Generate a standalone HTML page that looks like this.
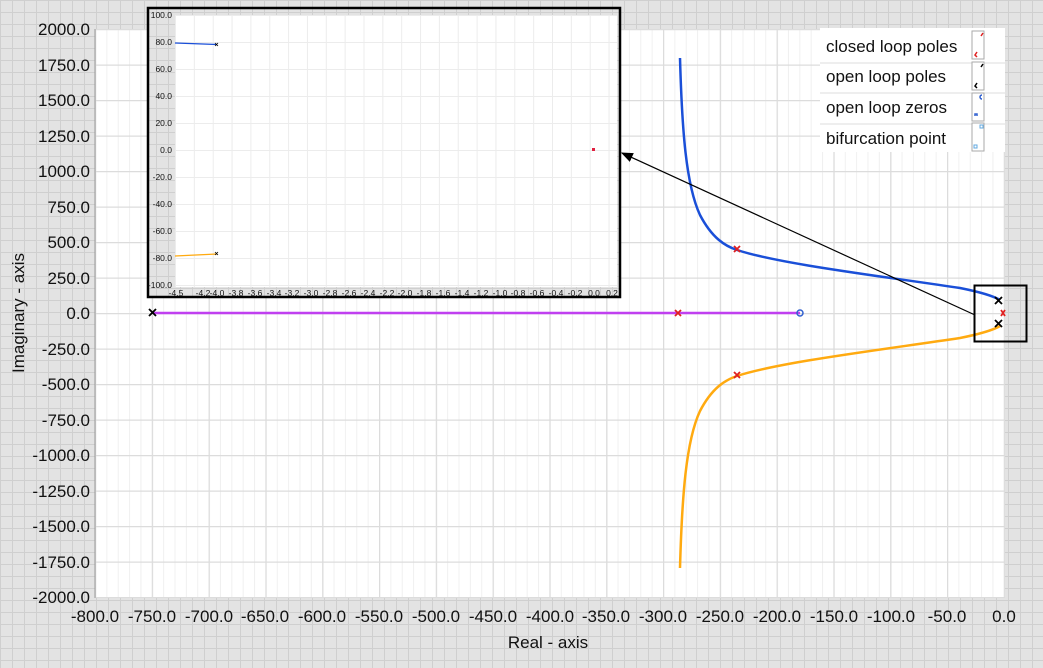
<!DOCTYPE html>
<html><head><meta charset="utf-8"><style>
html,body{margin:0;padding:0;width:1043px;height:668px;overflow:hidden;background:#e3e3e3}
svg{display:block}
text{font-family:"Liberation Sans",sans-serif;fill:#111}
</style></head><body>
<svg width="1043" height="668" viewBox="0 0 1043 668" xmlns="http://www.w3.org/2000/svg">
<defs>
<pattern id="bg" width="12" height="12" patternUnits="userSpaceOnUse">
<rect width="12" height="12" fill="#e3e3e3"/>
<path d="M0 0.5H12M0.5 0V12" stroke="#cfcfcf" stroke-width="1"/>
</pattern>
<pattern id="minv" x="95" width="11.36" height="10" patternUnits="userSpaceOnUse">
<path d="M0.5 0V10" stroke="#f0f0f0"/>
</pattern>
<pattern id="majv" x="95" width="56.8" height="10" patternUnits="userSpaceOnUse">
<path d="M0.5 0V10" stroke="#dcdcdc" stroke-width="1.5"/>
</pattern>
<pattern id="majh" y="29" width="10" height="35.5" patternUnits="userSpaceOnUse">
<path d="M0 0.5H10" stroke="#dcdcdc" stroke-width="1.5"/>
</pattern>
<pattern id="iv" x="175" width="18.85" height="10" patternUnits="userSpaceOnUse">
<path d="M0.5 0V10" stroke="#ececec"/>
</pattern>
<pattern id="ih" y="15" width="10" height="27" patternUnits="userSpaceOnUse">
<path d="M0 0.5H10" stroke="#ececec"/>
</pattern>
<marker id="ah" markerWidth="10" markerHeight="8" refX="9" refY="4" orient="auto"><path d="M0 0L10 4L0 8z" fill="#000"/></marker>
</defs>
<rect width="1043" height="668" fill="url(#bg)"/>
<rect x="95" y="29" width="910" height="569" fill="#fff"/>
<rect x="95" y="29" width="910" height="569" fill="url(#minv)"/>
<rect x="95" y="29" width="910" height="569" fill="url(#majv)"/>
<rect x="95" y="29" width="910" height="569" fill="url(#majh)"/>
<line x1="95" y1="29" x2="95" y2="598" stroke="#999"/>
<g font-size="17" text-anchor="end">
<text x="90" y="35">2000.0</text><text x="90" y="71">1750.0</text><text x="90" y="106">1500.0</text><text x="90" y="142">1250.0</text><text x="90" y="177">1000.0</text><text x="90" y="213">750.0</text><text x="90" y="248">500.0</text><text x="90" y="284">250.0</text><text x="90" y="319">0.0</text><text x="90" y="355">-250.0</text><text x="90" y="390">-500.0</text><text x="90" y="426">-750.0</text><text x="90" y="461">-1000.0</text><text x="90" y="497">-1250.0</text><text x="90" y="532">-1500.0</text><text x="90" y="568">-1750.0</text><text x="90" y="603">-2000.0</text>
</g>
<g font-size="17" text-anchor="middle">
<text x="95" y="622">-800.0</text><text x="152" y="622">-750.0</text><text x="209" y="622">-700.0</text><text x="265" y="622">-650.0</text><text x="322" y="622">-600.0</text><text x="379" y="622">-550.0</text><text x="436" y="622">-500.0</text><text x="493" y="622">-450.0</text><text x="550" y="622">-400.0</text><text x="606" y="622">-350.0</text><text x="663" y="622">-300.0</text><text x="720" y="622">-250.0</text><text x="777" y="622">-200.0</text><text x="834" y="622">-150.0</text><text x="891" y="622">-100.0</text><text x="947" y="622">-50.0</text><text x="1004" y="622">0.0</text>
</g>
<text x="548" y="648" font-size="17" text-anchor="middle">Real - axis</text>
<text transform="translate(24 313) rotate(-90)" font-size="17" text-anchor="middle">Imaginary - axis</text>
<path d="M680 58 C682 130 686 185 700 215 C712 238 725 246 737 250 C780 264 880 276 960 288 C985 293 995 297 1000 300" fill="none" stroke="#1a4fd8" stroke-width="2.5"/>
<path d="M680 568 C682 496 686 441 700 411 C712 388 725 380 737 376 C780 362 880 350 960 338 C985 333 995 329 1000 326" fill="none" stroke="#ffaa10" stroke-width="2.5"/>
<line x1="153" y1="313" x2="800" y2="313" stroke="#c040f0" stroke-width="2.5"/>
<circle cx="800" cy="313" r="3" fill="none" stroke="#3060d0" stroke-width="1.5"/>
<g stroke="#e02020" stroke-width="1.8">
<path d="M734 246l6 6M740 246l-6 6"/><path d="M734 372l6 6M740 372l-6 6"/><path d="M675 310l6 6M681 310l-6 6"/><path d="M1001 310l4 6M1005 310l-4 6"/>
</g>
<g stroke="#000" stroke-width="1.8">
<path d="M149 309l7 7M156 309l-7 7"/><path d="M995 297l7 7M1002 297l-7 7"/><path d="M995 320l7 7M1002 320l-7 7"/>
</g>
<line x1="975" y1="315" x2="622" y2="153" stroke="#000" stroke-width="1.2" marker-end="url(#ah)"/>
<rect x="974.5" y="285.5" width="52" height="56" fill="none" stroke="#000" stroke-width="2"/>
<rect x="820" y="28" width="185" height="124" fill="#fff"/>
<g stroke="#ddd"><line x1="820" y1="63" x2="1005" y2="63"/><line x1="820" y1="93" x2="1005" y2="93"/><line x1="820" y1="124" x2="1005" y2="124"/></g>
<g font-size="17"><text x="826" y="52">closed loop poles</text><text x="826" y="82">open loop poles</text><text x="826" y="113">open loop zeros</text><text x="826" y="144">bifurcation point</text></g>
<g fill="#fff" stroke="#aaa"><rect x="972" y="31" width="12" height="28"/><rect x="972" y="62" width="12" height="28"/><rect x="972" y="93" width="12" height="28"/><rect x="972" y="123" width="12" height="28"/></g>
<g stroke-width="1.5" fill="none"><path d="M983 33l-2 3M977 52l-2 3 2 2" stroke="#e02020"/><path d="M983 64l-2 3M977 83l-2 3 2 2" stroke="#000"/><path d="M982 95a2 2 0 0 0 0 4M975 116v-2h2v2" stroke="#3060d0"/><path d="M980 125h3v3h-3zM974 145h3v3h-3z" stroke="#60a8e0" stroke-width="1"/></g>
<rect x="148" y="8" width="472" height="289" fill="url(#bg)" stroke="#000" stroke-width="2.5"/>
<rect x="175" y="15" width="442" height="272" fill="#fff"/>
<rect x="175" y="15" width="442" height="272" fill="url(#iv)"/>
<rect x="175" y="15" width="442" height="272" fill="url(#ih)"/>
<g font-size="8.5" text-anchor="end">
<text x="172" y="18">100.0</text><text x="172" y="45">80.0</text><text x="172" y="72">60.0</text><text x="172" y="99">40.0</text><text x="172" y="126">20.0</text><text x="172" y="153">0.0</text><text x="172" y="180">-20.0</text><text x="172" y="207">-40.0</text><text x="172" y="234">-60.0</text><text x="172" y="261">-80.0</text><text x="172" y="288">-100.0</text>
</g>
<g font-size="8.5" text-anchor="middle">
<text x="176" y="296">-4.5</text><text x="203" y="296">-4.2</text><text x="217" y="296">-4.0</text><text x="236" y="296">-3.8</text><text x="255" y="296">-3.6</text><text x="274" y="296">-3.4</text><text x="292" y="296">-3.2</text><text x="311" y="296">-3.0</text><text x="330" y="296">-2.8</text><text x="349" y="296">-2.6</text><text x="368" y="296">-2.4</text><text x="387" y="296">-2.2</text><text x="405" y="296">-2.0</text><text x="424" y="296">-1.8</text><text x="443" y="296">-1.6</text><text x="462" y="296">-1.4</text><text x="481" y="296">-1.2</text><text x="500" y="296">-1.0</text><text x="518" y="296">-0.8</text><text x="537" y="296">-0.6</text><text x="556" y="296">-0.4</text><text x="575" y="296">-0.2</text><text x="594" y="296">0.0</text><text x="612" y="296">0.2</text>
</g>
<line x1="175" y1="43" x2="217" y2="44.5" stroke="#1a4fd8" stroke-width="1.3"/>
<line x1="175" y1="256" x2="217" y2="254" stroke="#ffaa10" stroke-width="1.3"/>
<g stroke="#000" stroke-width="0.8"><path d="M215 43l3 3M218 43l-3 3"/><path d="M215 252l3 3M218 252l-3 3"/></g>
<rect x="592" y="148" width="3" height="3" fill="#e02040"/>
</svg>
</body></html>
